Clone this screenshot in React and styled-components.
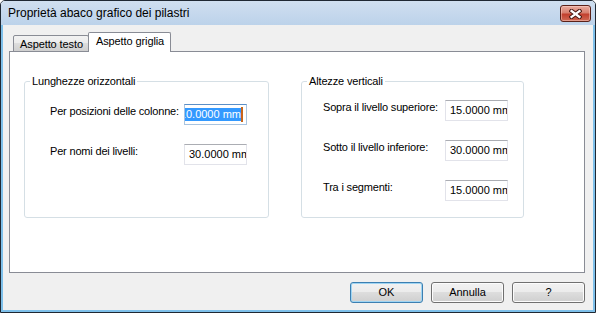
import React from 'react';
import styled, { createGlobalStyle } from 'styled-components';

const GlobalStyle = createGlobalStyle`
  html, body {
    margin: 0;
    padding: 0;
    background: #ffffff;
  }
  body {
    font-family: "Liberation Sans", Arial, sans-serif;
    font-size: 11px;
    color: #000;
  }
`;

const Window = styled.div`
  width: 596px;
  height: 313px;
  box-sizing: border-box;
  border: 1px solid #1f2833;
  border-radius: 5px 5px 0 0;
  display: flex;
  flex-direction: column;
  overflow: hidden;
`;

const TitleBar = styled.div`
  height: 24px;
  flex: none;
  display: flex;
  justify-content: space-between;
  align-items: flex-start;
  padding: 0 4px 0 7px;
  background: linear-gradient(#d0dff0, #bcd2ea);
`;

const Title = styled.div`
  font-size: 12px;
  line-height: 24px;
  color: #000;
`;

const CloseButton = styled.div`
  margin-top: 4px;
  width: 31px;
  height: 17px;
  box-sizing: border-box;
  border: 1px solid #5a2119;
  border-radius: 3px;
  background: linear-gradient(#e9ab9f 0%, #d7806f 45%, #c2402e 55%, #cf6a55 100%);
  box-shadow: inset 0 0 0 1px rgba(255, 220, 210, 0.45);
  display: flex;
  align-items: center;
  justify-content: center;
`;

const Body = styled.div`
  flex: 1;
  display: flex;
  flex-direction: column;
  background: #f0f0f0;
  border: 2px solid #7ec0ea;
  border-top: none;
  padding: 7px 8px 7px 6px;
`;

const TabStrip = styled.div`
  display: flex;
  align-items: flex-end;
  padding-left: 4px;
  height: 20px;
  position: relative;
  z-index: 1;
`;

const Tab = styled.div`
  box-sizing: border-box;
  height: ${p => (p.$active ? '20px' : '17px')};
  margin: ${p => (p.$active ? '0 -2px 0 -1px' : '0')};
  padding: 2px ${p => (p.$active ? '6px' : '5px')} 0 ${p => (p.$active ? '7px' : '6px')};
  border: 1px solid #898c95;
  border-bottom: ${p => (p.$active ? 'none' : '1px solid #898c95')};
  border-radius: 2px 2px 0 0;
  background: ${p => (p.$active
    ? '#ffffff'
    : 'linear-gradient(#f2f2f2 0%, #ebebeb 50%, #dddddd 50%, #cfcfcf 100%)')};
  line-height: 13px;
  letter-spacing: -0.1px;
  white-space: nowrap;
`;

const Panel = styled.div`
  margin-top: -1px;
  height: 222px;
  box-sizing: border-box;
  border: 1px solid #898c95;
  background: #ffffff;
  display: flex;
  align-items: flex-start;
  gap: 32px;
  padding: 23px 0 0 14px;
`;

const Group = styled.fieldset`
  margin: 0;
  min-width: 0;
  width: ${p => p.$width}px;
  height: 143px;
  box-sizing: border-box;
  border: 1px solid #d5dfe5;
  border-radius: 3px;
  padding: ${p => p.$top}px 0 0 0;
`;

const Legend = styled.legend`
  margin-left: 5px;
  padding: 0 2px;
  line-height: 13px;
  letter-spacing: -0.15px;
`;

const Rows = styled.div`
  display: grid;
  grid-template-columns: ${p => p.$labelWidth}px 63px;
  row-gap: 19px;
  padding-left: ${p => p.$left}px;
`;

const Label = styled.div`
  padding-top: 1px;
  line-height: 13px;
  letter-spacing: -0.18px;
  white-space: nowrap;
`;

const Field = styled.div`
  height: 21px;
  box-sizing: border-box;
  border: 1px solid ${p => (p.$focused ? '#a9c4e0' : '#e2e3ea')};
  border-top-color: ${p => (p.$focused ? '#5b8fc7' : '#abadb3')};
  background: #ffffff;
  display: flex;
  align-items: center;
  justify-content: ${p => (p.$focused ? 'flex-end' : 'flex-start')};
  padding: ${p => (p.$focused ? '0 3px 0 0' : '0 0 0 4px')};
  overflow: hidden;
  white-space: nowrap;
  line-height: 13px;
`;

const Selection = styled.span`
  background: #3399ff;
  color: #ffffff;
  flex: none;
`;

const Caret = styled.span`
  flex: none;
  width: 2px;
  height: 15px;
  background: #c8661c;
`;

const Footer = styled.div`
  margin-top: 9px;
  display: flex;
  justify-content: flex-end;
  gap: 8px;
`;

const Button = styled.div`
  width: 73px;
  height: 21px;
  box-sizing: border-box;
  border: 1px solid ${p => (p.$default ? '#3c7fb1' : '#707070')};
  border-radius: 3px;
  background: linear-gradient(#f2f2f2 0%, #ebebeb 50%, #dddddd 50%, #cfcfcf 100%);
  box-shadow: inset 0 0 0 1px ${p => (p.$default ? '#9fd5f3' : '#fcfcfc')};
  display: flex;
  align-items: center;
  justify-content: center;
  line-height: 13px;
`;

const CloseIcon = () => (
  <svg width="13" height="10" viewBox="0 0 13 10">
    <path d="M2.5 2 L10.5 8 M10.5 2 L2.5 8" stroke="#4a1a14" strokeWidth="4.2" strokeLinecap="square" />
    <path d="M2.5 2 L10.5 8 M10.5 2 L2.5 8" stroke="#ffffff" strokeWidth="2.2" strokeLinecap="square" />
  </svg>
);

const leftRows = [
  { label: 'Per posizioni delle colonne:', value: '10.0000 mm', focused: true },
  { label: 'Per nomi dei livelli:', value: '30.0000 mm' },
];

const rightRows = [
  { label: 'Sopra il livello superiore:', value: '15.0000 mm' },
  { label: 'Sotto il livello inferiore:', value: '30.0000 mm' },
  { label: 'Tra i segmenti:', value: '15.0000 mm' },
];

function FieldRow({ label, value, focused }) {
  return (
    <>
      <Label>{label}</Label>
      <Field $focused={focused}>
        {focused ? (
          <>
            <Selection>{value}</Selection>
            <Caret />
          </>
        ) : value}
      </Field>
    </>
  );
}

export default function App() {
  return (
    <>
      <GlobalStyle />
      <Window>
        <TitleBar>
          <Title>Proprietà abaco grafico dei pilastri</Title>
          <CloseButton><CloseIcon /></CloseButton>
        </TitleBar>
        <Body>
          <TabStrip>
            <Tab>Aspetto testo</Tab>
            <Tab $active>Aspetto griglia</Tab>
          </TabStrip>
          <Panel>
            <Group $width={245} $top={16}>
              <Legend>Lunghezze orizzontali</Legend>
              <Rows $labelWidth={134} $left={25}>
                {leftRows.map(r => <FieldRow key={r.label} {...r} />)}
              </Rows>
            </Group>
            <Group $width={223} $top={12}>
              <Legend>Altezze verticali</Legend>
              <Rows $labelWidth={122} $left={21}>
                {rightRows.map(r => <FieldRow key={r.label} {...r} />)}
              </Rows>
            </Group>
          </Panel>
          <Footer>
            <Button $default>OK</Button>
            <Button>Annulla</Button>
            <Button>?</Button>
          </Footer>
        </Body>
      </Window>
    </>
  );
}
